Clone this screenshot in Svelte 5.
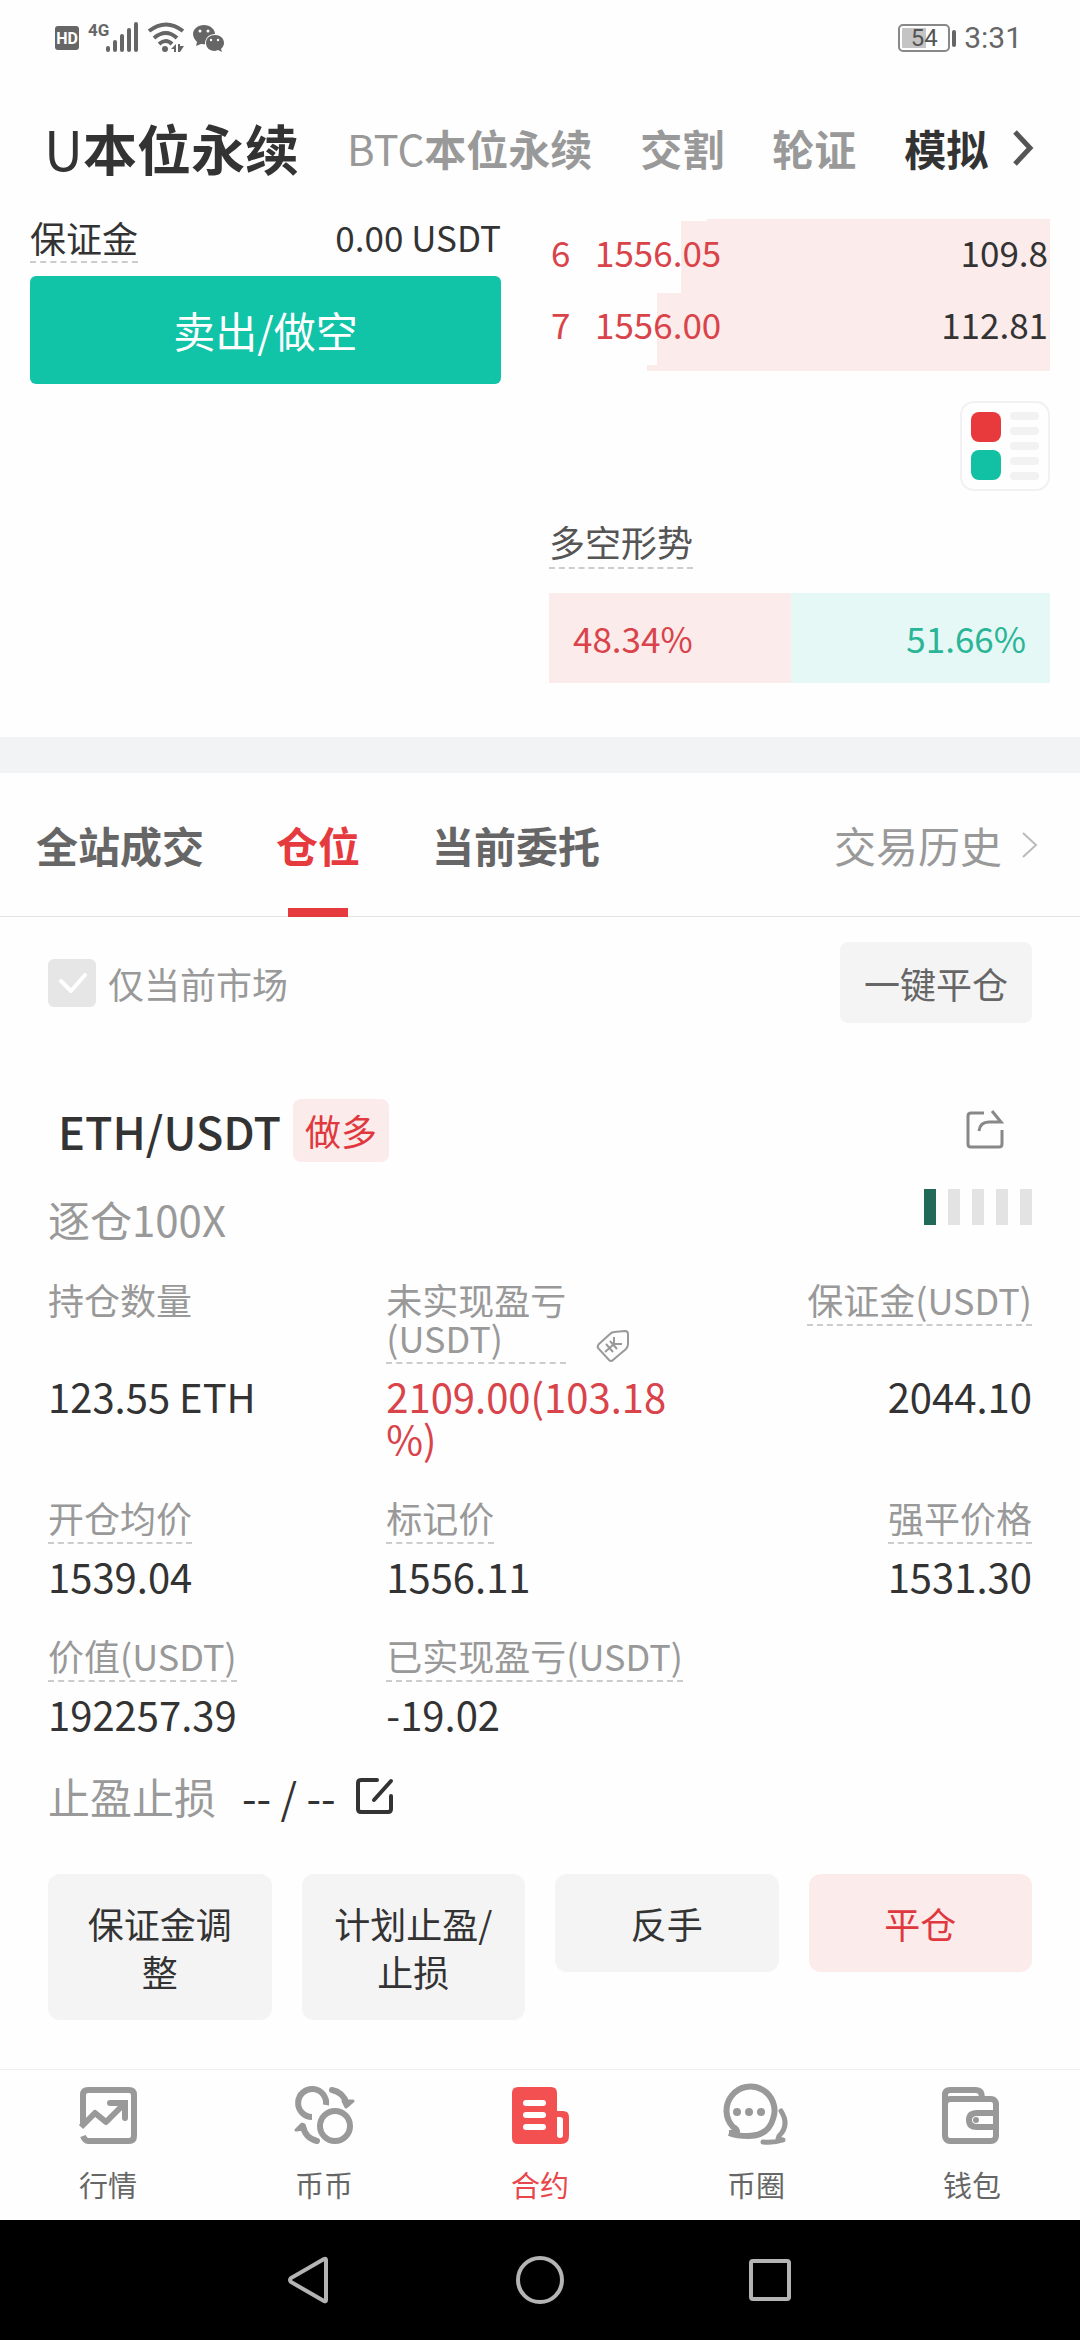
<script lang="ts">
	const markets = [
		{ latin: 'BTC', label: '本位永续' },
		{ latin: '', label: '交割' },
		{ latin: '', label: '轮证' },
	];

	const asks = [
		{ level: 6, price: '1556.05', amount: '109.8', depth: 73.6 },
		{ level: 7, price: '1556.00', amount: '112.81', depth: 78.4 },
	];

	// Neighbouring book levels, scrolled almost out of view: only an edge shows.
	const depthAbove = 68.5;
	const depthBelow = 80.4;

	const longRatio = 48.34;
	const shortRatio = 51.66;

	const tabs = ['全站成交', '仓位', '当前委托'];
	let activeTab = $state('仓位');

	const fields = [
		{ label: '持仓数量', value: '123.55 ETH', hint: false },
		{ label: '未实现盈亏(USDT)', value: '2109.00(103.18%)', hint: true, profit: true },
		{ label: '保证金(USDT)', value: '2044.10', hint: true },
		{ label: '开仓均价', value: '1539.04', hint: true },
		{ label: '标记价', value: '1556.11', hint: true },
		{ label: '强平价格', value: '1531.30', hint: true },
		{ label: '价值(USDT)', value: '192257.39', hint: true },
		{ label: '已实现盈亏(USDT)', value: '-19.02', hint: true },
	];

	const actions = ['保证金调整', '计划止盈/止损', '反手', '平仓'];

	const nav = [
		{ id: 'quotes', label: '行情' },
		{ id: 'spot', label: '币币' },
		{ id: 'futures', label: '合约' },
		{ id: 'circle', label: '币圈' },
		{ id: 'wallet', label: '钱包' },
	];
	let activeNav = $state('futures');
	let onlyCurrent = $state(true);
</script>

<div class="screen">
	<div class="status">
		<svg class="status-icons" width="172" height="36" viewBox="54 20 172 36" aria-hidden="true">
			<rect x="55" y="26" width="24" height="24" rx="3" fill="#666" />
			<text x="67" y="44" class="hd">HD</text>
			<text x="88" y="36" class="gen">4G</text>
			<g stroke="#666" stroke-width="4" stroke-linecap="round">
				<path d="M108 48v2M115 42v8M122 36v14M129 30v20M136 24v26" />
			</g>
			<g fill="none" stroke="#666" stroke-width="4">
				<path d="M149 31q17-13 34 0M154 38q12-10 23 0M159 44q7-6 13 0" />
			</g>
			<circle cx="165" cy="49" r="3" fill="#666" />
			<path d="M171 49l5-5v8h-2v-3zM178 44h2v2h4l-4 6h-2z" fill="#666" />
			<path d="M204 25c-6 0-11 4-11 9 0 3 2 6 4 8l-1 4 5-2c2 0 3 1 4 0 0-6 4-10 10-10 0-5-5-9-11-9z" fill="#666" />
			<path d="M215 35c-5 0-9 3-9 8s4 8 9 8l3-1 4 2-1-3c2-2 3-4 3-6 0-5-4-8-9-8z" fill="#666" />
			<g fill="#fff">
				<circle cx="200" cy="31" r="1.5" /><circle cx="208" cy="31" r="1.5" />
				<circle cx="211" cy="40" r="1.2" /><circle cx="218" cy="40" r="1.2" />
			</g>
		</svg>
		<div class="status-right">
			<div class="battery"><span class="battery-box">54</span><span class="battery-tip"></span></div>
			<span class="clock">3:31</span>
		</div>
	</div>

	<nav class="markets">
		<button type="button" class="market current"><span class="latin">U</span>本位永续</button>
		{#each markets as market (market.label)}
			<button type="button" class="market">{#if market.latin}<span class="latin">{market.latin}</span>{/if}{market.label}</button>
		{/each}
		<button type="button" class="market demo">
			模拟
			<svg width="24" height="36" viewBox="0 0 24 36" fill="none" stroke="#555" stroke-width="5" aria-hidden="true">
				<path d="M3 2l15 16L3 34" />
			</svg>
		</button>
	</nav>

	<section class="trade">
		<div class="order">
			<div class="margin-row">
				<span class="dashed">保证金</span>
				<span class="num">0.00 USDT</span>
			</div>
			<button type="button" class="sell">卖出/做空</button>
		</div>

		<div class="book">
			<div class="asks">
				<div class="sliver top" style:width="{depthAbove}%"></div>
				{#each asks as ask (ask.level)}
					<div class="ask">
						<div class="depth" style:width="{ask.depth}%"></div>
						<span class="level">{ask.level}</span>
						<span class="price">{ask.price}</span>
						<span class="amount">{ask.amount}</span>
					</div>
				{/each}
				<div class="sliver bottom" style:width="{depthBelow}%"></div>
			</div>

			<button type="button" class="book-mode" aria-label="盘口显示">
				<svg width="68" height="68" viewBox="0 0 68 68" aria-hidden="true">
					<rect width="30" height="30" rx="8" fill="#e8393c" />
					<rect y="38" width="30" height="30" rx="8" fill="#12c1a4" />
					{#each [0, 15, 30, 45, 60] as y (y)}
						<rect x="39" {y} width="29" height="8" rx="4" fill="#f2f2f2" />
					{/each}
				</svg>
			</button>

			<span class="dashed ratio-title">多空形势</span>
			<div class="ratio">
				<div class="ratio-long" style:width="{longRatio}%">{longRatio}%</div>
				<div class="ratio-short" style:width="{shortRatio}%">{shortRatio}%</div>
			</div>
		</div>
	</section>

	<div class="band"></div>

	<div class="tabs">
		{#each tabs as tab (tab)}
			<button type="button" class="tab" class:active={activeTab === tab} onclick={() => (activeTab = tab)}>
				{tab}
			</button>
		{/each}
		<a class="history" href="#history">
			交易历史
			<svg width="16" height="26" viewBox="0 0 16 26" fill="none" stroke="#bbb" stroke-width="2" aria-hidden="true">
				<path d="M1 1l13 12L1 25" />
			</svg>
		</a>
	</div>

	<div class="filter">
		<label class="only-current">
			<input type="checkbox" bind:checked={onlyCurrent} />
			仅当前市场
		</label>
		<button type="button" class="close-all">一键平仓</button>
	</div>

	<article class="position">
		<header class="pair-row">
			<h2>ETH/USDT</h2>
			<span class="side">做多</span>
			<button type="button" class="share" aria-label="分享">
				<svg width="38" height="42" viewBox="0 0 38 42" fill="none" stroke="#888" stroke-width="3" aria-hidden="true">
					<path d="M18 3H5q-3 0-3 3v28q0 3 3 3h28q3 0 3-3V20" />
					<path d="M26 1l9 11H23q-9 0-10 9" />
				</svg>
			</button>
		</header>

		<div class="mode-row">
			<span>逐仓100X</span>
			<div class="risk" role="img" aria-label="风险等级">
				<i class="on"></i><i></i><i></i><i></i><i></i>
			</div>
		</div>

		<div class="fields">
			{#each fields as field (field.label)}
				<div class="field">
					<div class="field-label">
						<span class:dashed={field.hint} class:narrow={field.profit}>{field.label}</span>
						{#if field.profit}
							<svg width="34" height="34" viewBox="0 0 34 34" fill="none" stroke="#999" stroke-width="2" aria-hidden="true">
								<path d="M2 18Q1 16 3 14L14 4Q16 2 18 2L29 1Q32 1 32 4V14Q32 17 30 19L17 30Q15 32 13 30Z" />
								<path d="M9 22L18 14M18 14V7M18 14h8M10 14l7 8M14 11l7 8" />
							</svg>
						{/if}
					</div>
					<div class="field-value" class:profit={field.profit}>{field.value}</div>
				</div>
			{/each}
		</div>

		<div class="stops">
			<span class="stops-label">止盈止损</span>
			<span>-- / --</span>
			<button type="button" class="edit" aria-label="编辑止盈止损">
				<svg width="38" height="38" viewBox="0 0 38 38" fill="none" stroke="#333" stroke-width="4" stroke-linecap="round" aria-hidden="true">
					<path d="M21 3H5q-3 0-3 3v26q0 3 3 3h27q3 0 3-3V19" />
					<path d="M18 23L35 4" />
				</svg>
			</button>
		</div>

		<div class="actions">
			{#each actions as action (action)}
				<button type="button" class="action" class:close={action === '平仓'}>{action}</button>
			{/each}
		</div>
	</article>

	<nav class="bottom-nav">
		{#each nav as item (item.id)}
			<button type="button" class="nav-item" class:active={activeNav === item.id} onclick={() => (activeNav = item.id)}>
				<svg width="68" height="64" viewBox="0 0 68 64" fill="none" stroke="#999" stroke-width="6" aria-hidden="true">
					{#if item.id === 'quotes'}
						<path d="M9 43V12q0-5 5-5h41q5 0 5 5v41q0 5-5 5H14q-3 0-5-5" />
						<path d="M7 44l14-14 11 9 19-19" stroke-linejoin="round" />
						<path d="M36 20h15v15" stroke-linecap="round" />
					{:else if item.id === 'spot'}
						<path d="M22 34A14 14 0 1 1 36 22" />
						<circle cx="45" cy="43" r="15" />
						<path d="M42 7q11 2 15 14" stroke-linecap="round" />
						<path d="M53 18h10l-7 6z" fill="#999" stroke-width="3" stroke-linejoin="round" />
						<path d="M27 58q-12-3-14-15" stroke-linecap="round" />
						<path d="M6 47l6-6 3 5z" fill="#999" stroke-width="3" stroke-linejoin="round" />
					{:else if item.id === 'futures'}
						<path d="M12 4h33q6 0 6 6v18h6q6 0 6 6v19q0 8-8 8H12q-6 0-6-6V10q0-6 6-6z" fill="#f35052" stroke="none" />
						<path d="M20 20h17M20 32h17M20 44h17M54 37v15" stroke="#fff" stroke-linecap="round" />
						<path d="M51 34h3v6h-3z" fill="#fff" stroke="none" />
					{:else if item.id === 'circle'}
						<path d="M7 50q5 0 8-1 0-3-4-5A24 24 0 1 1 51 36Q46 53 26 53 15 53 7 50" stroke-linejoin="round" />
						<g fill="#999" stroke="none">
							<circle cx="15" cy="29" r="4" /><circle cx="27" cy="29" r="4" /><circle cx="39" cy="29" r="4" />
						</g>
						<path d="M59 28q9 14-2 25l-1 3 5 1q-9 3-20 2" stroke-width="5" stroke-linecap="round" stroke-linejoin="round" />
					{:else}
						<rect x="7" y="16" width="51" height="42" rx="5" />
						<path d="M7 20v-8q0-5 5-5h26q6 0 6 8" />
						<path d="M58 30H39q-8 0-8 7t8 7h19" />
						<circle cx="38" cy="37" r="3" fill="#999" stroke="none" />
					{/if}
				</svg>
				{item.label}
			</button>
		{/each}
	</nav>

	<div class="system-nav">
		<button type="button" aria-label="返回">
			<svg width="48" height="48" viewBox="0 0 48 48"><path d="M40 4v40q0 2-2 1L5 26q-2-2 0-4L38 3q2-1 2 1z" /></svg>
		</button>
		<button type="button" aria-label="主页">
			<svg width="48" height="48" viewBox="0 0 48 48"><circle cx="24" cy="24" r="22" /></svg>
		</button>
		<button type="button" aria-label="最近任务">
			<svg width="48" height="48" viewBox="0 0 48 48"><rect x="5" y="5" width="38" height="38" rx="2" /></svg>
		</button>
	</div>
</div>

<style>
	:global(body) {
		background: #fefefe;
	}

	.screen {
		display: flex;
		flex-direction: column;
		min-height: 100vh;
		color: #333;
		font-family: 'Noto Sans CJK SC', sans-serif;
		font-size: 36px;
		line-height: 48px;
	}

	button {
		padding: 0;
		border: 0;
		background: none;
		color: inherit;
		font: inherit;
		cursor: pointer;
	}

	svg {
		display: block;
		flex: none;
	}

	.status {
		display: flex;
		align-items: center;
		justify-content: space-between;
		height: 76px;
		padding: 0 58px 0 54px;
		color: #666;
	}

	.hd {
		fill: #fff;
		font: 700 16px Roboto, sans-serif;
		text-anchor: middle;
	}

	.gen {
		fill: #666;
		font: 700 17px Roboto, sans-serif;
	}

	.status-right,
	.battery {
		display: flex;
		align-items: center;
		font-family: Roboto, sans-serif;
	}

	.status-right {
		gap: 8px;
	}

	.battery {
		gap: 2px;
	}

	.battery-box {
		box-sizing: border-box;
		width: 52px;
		height: 28px;
		padding: 2px;
		border: 2px solid #888;
		border-radius: 5px;
		background: linear-gradient(90deg, #c4c4c4 54%, transparent 54%) content-box;
		color: #555;
		font-size: 24px;
		line-height: 20px;
		text-align: center;
	}

	.battery-tip {
		width: 4px;
		height: 17px;
		border-radius: 2px;
		background: #666;
	}

	.clock {
		font-size: 30px;
	}

	.markets {
		display: flex;
		align-items: center;
		gap: 48px;
		height: 143px;
		padding: 0 44px;
		white-space: nowrap;
	}

	.market {
		color: #999;
		font-size: 42px;
		font-weight: 700;
	}

	.market.current {
		color: #333;
		font-size: 54px;
	}

	.market .latin {
		font-weight: 400;
	}

	.market.demo {
		display: flex;
		align-items: center;
		gap: 24px;
		color: #333;
	}

	.trade {
		display: flex;
		gap: 48px;
		padding: 0 30px 54px;
	}

	.order {
		flex: 471;
	}

	.book {
		display: flex;
		flex: 501;
		flex-direction: column;
	}

	.dashed {
		padding-bottom: 6px;
		border-bottom: 2px dashed #ccc;
	}

	.margin-row {
		display: flex;
		align-items: flex-start;
		justify-content: space-between;
		padding-bottom: 13px;
		line-height: 36px;
	}

	.num {
		font-size: 35px;
	}

	.sell {
		width: 100%;
		height: 108px;
		border-radius: 6px;
		background: #11c3a7;
		color: #fff;
		font-size: 42px;
	}

	.ask {
		position: relative;
		display: flex;
		align-items: flex-start;
		height: 72px;
		padding: 0 2px;
		font-size: 35px;
		line-height: 62px;
	}

	.depth {
		position: absolute;
		inset: 0 0 0 auto;
		background: #fcebeb;
	}

	.level,
	.price,
	.amount {
		position: relative;
	}

	.level,
	.price {
		color: #d9434a;
	}

	.level {
		width: 44px;
	}

	.amount {
		margin-left: auto;
	}

	.sliver {
		margin-left: auto;
		background: #fcebeb;
	}

	.sliver.top {
		height: 2px;
	}

	.sliver.bottom {
		height: 6px;
	}

	.book-mode {
		align-self: flex-end;
		margin: 30px 0;
		padding: 9px;
		border: 2px solid #f3f0f1;
		border-radius: 14px;
	}

	.ratio-title {
		align-self: flex-start;
		margin-bottom: 24px;
		color: #555;
		line-height: 40px;
	}

	.ratio {
		display: flex;
		font-size: 35px;
		line-height: 90px;
	}

	.ratio div {
		box-sizing: border-box;
		padding: 0 24px;
	}

	.ratio-long {
		background: #fcebeb;
		color: #d9434a;
	}

	.ratio-short {
		background: #e5f8f6;
		color: #2ab597;
		text-align: right;
	}

	.band {
		height: 36px;
		background: #f1f3f5;
	}

	.tabs {
		display: flex;
		gap: 72px;
		padding: 0 42px 0 36px;
		border-bottom: 1px solid #e3e3e3;
		font-size: 42px;
		line-height: 143px;
	}

	.tab {
		position: relative;
		color: #666;
		font-weight: 700;
	}

	.tab.active {
		color: #e63b3e;
	}

	.tab.active::after {
		position: absolute;
		bottom: -1px;
		left: calc(50% - 30px);
		width: 60px;
		height: 9px;
		background: currentColor;
		content: '';
	}

	.history {
		display: flex;
		align-items: center;
		gap: 20px;
		margin-left: auto;
		color: #999;
		text-decoration: none;
	}

	.filter {
		display: flex;
		align-items: center;
		justify-content: space-between;
		padding: 25px 48px 0;
	}

	.only-current {
		display: flex;
		align-items: center;
		gap: 12px;
		color: #999;
	}

	.only-current input {
		width: 48px;
		height: 48px;
		margin: 0;
		border-radius: 6px;
		background: #e6e6e6;
		appearance: none;
	}

	.only-current input:checked {
		background-image: url("data:image/svg+xml,%3Csvg xmlns='http://www.w3.org/2000/svg' viewBox='0 0 48 48' fill='none' stroke='%23fff' stroke-width='4' stroke-linecap='round' stroke-linejoin='round'%3E%3Cpath d='M13 22l10 10 14-16'/%3E%3C/svg%3E");
	}

	.close-all {
		height: 81px;
		padding: 0 24px;
		border-radius: 8px;
		background: #f4f4f4;
		color: #666;
	}

	.position {
		padding: 76px 48px 48px;
	}

	.pair-row {
		display: flex;
		align-items: center;
		padding: 0 28px 0 10px;
	}

	h2 {
		margin: 0;
		font-size: 45px;
		font-weight: 500;
	}

	.side {
		margin-left: 12px;
		padding: 0 12px;
		border-radius: 8px;
		background: #fcebeb;
		color: #e0383e;
		line-height: 63px;
	}

	.share {
		margin-left: auto;
	}

	.mode-row {
		display: flex;
		justify-content: space-between;
		padding: 27px 0 31px;
		color: #999;
		font-size: 42px;
		line-height: 60px;
	}

	.risk {
		display: flex;
		gap: 12px;
	}

	.risk i {
		width: 12px;
		height: 36px;
		background: #e3e3e3;
	}

	.risk .on {
		background: #216a57;
	}

	.fields {
		display: grid;
		grid-template-columns: 11fr 10fr 11fr;
		row-gap: 11px;
	}

	.field {
		display: grid;
		grid-row: span 2;
		grid-template-rows: subgrid;
		padding-bottom: 28px;
	}

	.field:nth-child(3n) {
		justify-items: end;
	}

	.field-label {
		display: flex;
		align-items: flex-end;
		align-self: start;
		gap: 30px;
		color: #999;
		line-height: 38px;
		white-space: nowrap;
	}

	.narrow {
		width: 5em;
		white-space: normal;
	}

	.field-value {
		font-size: 40px;
		line-height: 42px;
		overflow-wrap: anywhere;
	}

	.profit {
		color: #d9434a;
	}

	.stops {
		display: flex;
		align-items: center;
		gap: 26px;
		padding-top: 3px;
		font-size: 42px;
		line-height: 60px;
	}

	.stops-label {
		color: #999;
	}

	.edit {
		margin-left: -6px;
	}

	.actions {
		display: grid;
		grid-template-columns: repeat(4, 1fr);
		align-items: start;
		gap: 30px;
		padding-top: 48px;
	}

	.action {
		padding: 25px 24px;
		border-radius: 12px;
		background: #f4f4f4;
	}

	.action.close {
		background: #fcebeb;
		color: #e0383e;
	}

	.bottom-nav {
		display: flex;
		margin-top: auto;
		border-top: 1px solid #eee;
	}

	.nav-item {
		display: flex;
		flex: 1;
		flex-direction: column;
		align-items: center;
		gap: 13px;
		padding: 13px 0 12px;
		color: #666;
		font-size: 29px;
	}

	.nav-item.active {
		color: #e8474b;
	}

	.system-nav {
		display: flex;
		align-items: center;
		justify-content: center;
		gap: 182px;
		height: 120px;
		background: #000;
	}

	.system-nav svg {
		fill: none;
		stroke: #b4b4b4;
		stroke-width: 4px;
	}
</style>
